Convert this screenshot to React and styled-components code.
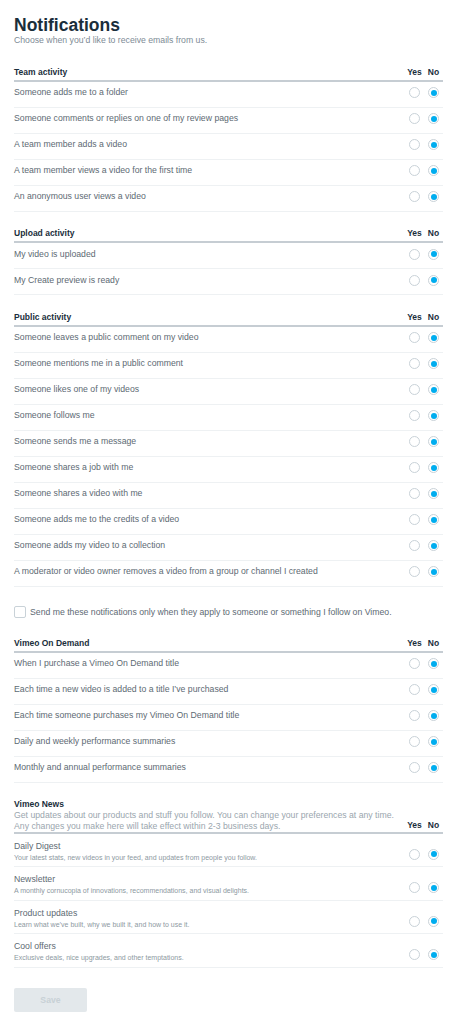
import React from "react";
import styled, { createGlobalStyle } from "styled-components";

const GlobalStyle = createGlobalStyle`
  body {
    margin: 0;
    background: #fff;
    font-family: "Liberation Sans", Arial, sans-serif;
  }
`;

const Page = styled.div`
  padding: 15px 15px 20px 14px;
`;

const Title = styled.h1`
  margin: 0;
  font-size: 17.5px;
  line-height: 20px;
  font-weight: 700;
  color: #1a2e3b;
`;

const Subtitle = styled.p`
  margin: 0;
  font-size: 8.7px;
  line-height: 11px;
  color: #7d8b95;
`;

const Section = styled.section`
  margin-top: ${(p) => (p.$first ? "20.5px" : "16.5px")};
`;

const Header = styled.div`
  display: flex;
  align-items: flex-end;
  border-bottom: 2px solid #c6cdd3;
  padding-bottom: ${(p) => (p.$withText ? "0.5px" : "2px")};
`;

const HeaderText = styled.div`
  flex: 1;
`;

const HeaderTitle = styled.div`
  font-size: 8.5px;
  font-weight: 700;
  line-height: 11px;
  color: #1a2e3b;
`;

const HeaderDesc = styled.div`
  font-size: 8.7px;
  line-height: 10.5px;
  color: #9aa6ae;
`;

const Choices = styled.div`
  display: flex;
`;

const ChoiceLabel = styled.span`
  width: 19px;
  text-align: center;
  font-size: 8.5px;
  font-weight: 700;
  line-height: 11px;
  color: #1a2e3b;
`;

const Row = styled.div`
  display: flex;
  align-items: center;
  box-sizing: border-box;
  height: ${(p) => (p.$tall ? "33.5px" : "26px")};
  padding: ${(p) => (p.$tall ? "6px 0 3.5px" : "0 0 3px")};
  border-bottom: 1px solid #eef1f3;
`;

const RowText = styled.div`
  flex: 1;
`;

const RowLabel = styled.div`
  font-size: 8.7px;
  line-height: ${(p) => (p.$tall ? "13px" : "11px")};
  color: #5d6a73;
`;

const RowDesc = styled.div`
  font-size: 7px;
  line-height: 10px;
  color: #8d999f;
`;

const RadioCell = styled.div`
  width: 19px;
  display: flex;
  justify-content: center;
  padding-top: ${(p) => (p.$tall ? "6px" : "0")};
`;

const Radio = styled.span`
  width: 11px;
  height: 11px;
  box-sizing: border-box;
  border-radius: 50%;
  border: 1px solid #c9d2d8;
  background: #fff;
  display: flex;
  align-items: center;
  justify-content: center;

  &::after {
    content: "";
    width: 6px;
    height: 6px;
    border-radius: 50%;
    background: ${(p) => (p.$checked ? "#00adef" : "transparent")};
  }
`;

const CheckRow = styled.label`
  display: flex;
  align-items: center;
  gap: 4px;
  margin: 19px 0 20px;
  font-size: 8.7px;
  line-height: 12px;
  color: #5d6a73;
`;

const Checkbox = styled.span`
  width: 12px;
  height: 12px;
  box-sizing: border-box;
  border: 1px solid #c9d2d8;
  border-radius: 2px;
  background: #fff;
`;

const SaveButton = styled.button`
  display: block;
  margin-top: 20px;
  width: 73px;
  height: 24px;
  border: none;
  border-radius: 2px;
  background: #e3e8eb;
  color: #c8d1d6;
  font-family: inherit;
  font-size: 8.7px;
  font-weight: 700;
`;

const sections = [
  {
    title: "Team activity",
    rows: [
      "Someone adds me to a folder",
      "Someone comments or replies on one of my review pages",
      "A team member adds a video",
      "A team member views a video for the first time",
      "An anonymous user views a video",
    ],
  },
  {
    title: "Upload activity",
    rows: ["My video is uploaded", "My Create preview is ready"],
  },
  {
    title: "Public activity",
    rows: [
      "Someone leaves a public comment on my video",
      "Someone mentions me in a public comment",
      "Someone likes one of my videos",
      "Someone follows me",
      "Someone sends me a message",
      "Someone shares a job with me",
      "Someone shares a video with me",
      "Someone adds me to the credits of a video",
      "Someone adds my video to a collection",
      "A moderator or video owner removes a video from a group or channel I created",
    ],
    checkbox:
      "Send me these notifications only when they apply to someone or something I follow on Vimeo.",
  },
  {
    title: "Vimeo On Demand",
    rows: [
      "When I purchase a Vimeo On Demand title",
      "Each time a new video is added to a title I\u2019ve purchased",
      "Each time someone purchases my Vimeo On Demand title",
      "Daily and weekly performance summaries",
      "Monthly and annual performance summaries",
    ],
  },
];

const news = [
  {
    title: "Daily Digest",
    desc: "Your latest stats, new videos in your feed, and updates from people you follow.",
  },
  {
    title: "Newsletter",
    desc: "A monthly cornucopia of innovations, recommendations, and visual delights.",
  },
  {
    title: "Product updates",
    desc: "Learn what we\u2019ve built, why we built it, and how to use it.",
  },
  {
    title: "Cool offers",
    desc: "Exclusive deals, nice upgrades, and other temptations.",
  },
];

function YesNo({ tall }) {
  return (
    <>
      <RadioCell $tall={tall}>
        <Radio />
      </RadioCell>
      <RadioCell $tall={tall}>
        <Radio $checked />
      </RadioCell>
    </>
  );
}

function Choice() {
  return (
    <Choices>
      <ChoiceLabel>Yes</ChoiceLabel>
      <ChoiceLabel>No</ChoiceLabel>
    </Choices>
  );
}

export default function App() {
  return (
    <Page>
      <GlobalStyle />
      <Title>Notifications</Title>
      <Subtitle>Choose when you&rsquo;d like to receive emails from us.</Subtitle>

      {sections.map((section, i) => (
        <React.Fragment key={section.title}>
          <Section $first={i === 0}>
            <Header>
              <HeaderText>
                <HeaderTitle>{section.title}</HeaderTitle>
              </HeaderText>
              <Choice />
            </Header>
            {section.rows.map((row) => (
              <Row key={row}>
                <RowText>
                  <RowLabel>{row}</RowLabel>
                </RowText>
                <YesNo />
              </Row>
            ))}
          </Section>
          {section.checkbox && (
            <CheckRow>
              <Checkbox />
              {section.checkbox}
            </CheckRow>
          )}
        </React.Fragment>
      ))}

      <Section>
        <Header $withText>
          <HeaderText>
            <HeaderTitle>Vimeo News</HeaderTitle>
            <HeaderDesc>
              Get updates about our products and stuff you follow. You can change your
              preferences at any time.
              <br />
              Any changes you make here will take effect within 2-3 business days.
            </HeaderDesc>
          </HeaderText>
          <Choice />
        </Header>
        {news.map((item) => (
          <Row key={item.title} $tall>
            <RowText>
              <RowLabel $tall>{item.title}</RowLabel>
              <RowDesc>{item.desc}</RowDesc>
            </RowText>
            <YesNo tall />
          </Row>
        ))}
      </Section>

      <SaveButton disabled>Save</SaveButton>
    </Page>
  );
}
